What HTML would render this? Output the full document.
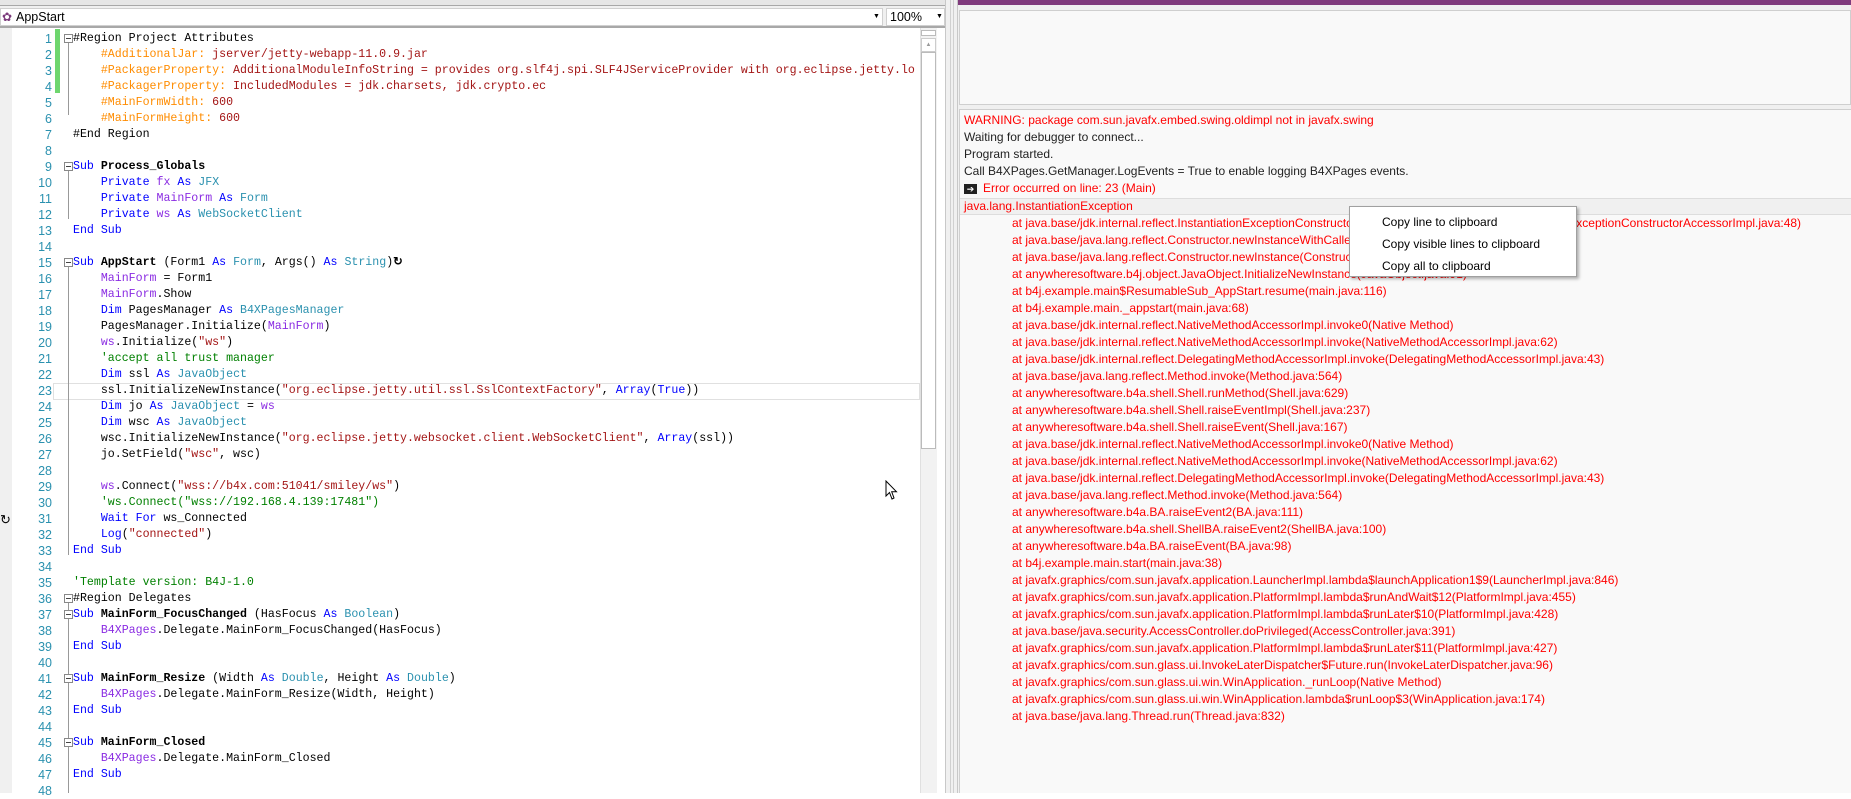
<!DOCTYPE html>
<html><head><meta charset="utf-8"><style>
*{margin:0;padding:0;box-sizing:border-box}
body{width:1851px;height:793px;position:relative;overflow:hidden;background:#fff;font-family:"Liberation Sans",sans-serif}
.a{position:absolute}
.code{position:absolute;left:0;top:31px;width:920px;font-family:"Liberation Mono",monospace;font-size:11.6px;color:#000}
.ln{position:absolute;height:16px;line-height:16px;white-space:pre}
.num{position:absolute;right:868px;width:40px;text-align:right;color:#2b91af;height:16px;line-height:16px;font-family:"Liberation Sans",sans-serif;font-size:12.5px}
.k{color:#0000ff}.t{color:#2b91af}.v{color:#8a2be2}.s{color:#a31515}.c{color:#008000}.o{color:#ff8c00}.b{font-weight:bold}
.fold{position:absolute;left:64px;width:9px;height:9px;border:1px solid #888;background:#fff;margin-top:3px}
.fold:after{content:"";position:absolute;left:1px;top:3px;width:5px;height:1px;background:#444}
.log{position:absolute;left:964px;font-size:12px;line-height:17px;color:#ff0000;white-space:pre}
</style></head><body>
<div class="a" style="left:0;top:0;width:945px;height:5px;background:#e6e6e6"></div>
<div class="a" style="left:0;top:5px;width:945px;height:1px;background:#a8a8a8"></div>
<div class="a" style="left:0;top:6px;width:945px;height:21px;background:#f0f0f0"></div>
<div class="a" style="left:0;top:26px;width:945px;height:2px;background:#a8a8a8"></div>
<div class="a" style="left:0;top:8px;width:883px;height:18px;background:#fff;border:1px solid #d0d0d0"></div>
<div class="a" style="left:2px;top:10px;font-size:12px;color:#7b3a7b">✿</div>
<div class="a" style="left:16px;top:9px;font-size:12.5px;line-height:16px">AppStart</div>
<div class="a" style="left:873px;top:9px;font-size:7px;line-height:16px">▼</div>
<div class="a" style="left:886px;top:8px;width:59px;height:18px;background:#fff;border:1px solid #d0d0d0"></div>
<div class="a" style="left:890px;top:9px;font-size:12.5px;line-height:16px">100%</div>
<div class="a" style="left:936px;top:9px;font-size:7px;line-height:16px">▼</div>
<div class="a" style="left:0;top:28px;width:12px;height:765px;background:#f0f0f0"></div>
<div class="a" style="left:55px;top:29px;width:5px;height:64px;background:#6ed66e"></div>
<div class="a" style="left:53px;top:383px;width:867px;height:17px;border:1px solid #e0e0e0"></div>
<div class="a" style="left:0;top:512px;font-size:13px;line-height:16px">↻</div>
<div class="a" style="left:68px;top:43px;width:1px;height:72px;background:#999"></div>
<div class="a" style="left:68px;top:171px;width:1px;height:48px;background:#999"></div>
<div class="a" style="left:68px;top:267px;width:1px;height:288px;background:#999"></div>
<div class="a" style="left:68px;top:603px;width:1px;height:190px;background:#999"></div>
<div class="code">
<div class="fold" style="top:0"></div><div class="fold" style="top:128px"></div><div class="fold" style="top:224px"></div><div class="fold" style="top:560px"></div><div class="fold" style="top:576px"></div><div class="fold" style="top:640px"></div><div class="fold" style="top:704px"></div>
<div class="num" style="top:0">1</div><div class="ln" style="top:0;left:73px">#Region Project Attributes</div>
<div class="num" style="top:16px">2</div><div class="ln" style="top:16px;left:73px">    <span class="o">#AdditionalJar:</span><span class="s"> jserver/jetty-webapp-11.0.9.jar</span></div>
<div class="num" style="top:32px">3</div><div class="ln" style="top:32px;left:73px">    <span class="o">#PackagerProperty:</span><span class="s"> AdditionalModuleInfoString = provides org.slf4j.spi.SLF4JServiceProvider with org.eclipse.jetty.lo</span></div>
<div class="num" style="top:48px">4</div><div class="ln" style="top:48px;left:73px">    <span class="o">#PackagerProperty:</span><span class="s"> IncludedModules = jdk.charsets, jdk.crypto.ec</span></div>
<div class="num" style="top:64px">5</div><div class="ln" style="top:64px;left:73px">    <span class="o">#MainFormWidth:</span><span class="s"> 600</span></div>
<div class="num" style="top:80px">6</div><div class="ln" style="top:80px;left:73px">    <span class="o">#MainFormHeight:</span><span class="s"> 600</span></div>
<div class="num" style="top:96px">7</div><div class="ln" style="top:96px;left:73px">#End Region</div>
<div class="num" style="top:112px">8</div>
<div class="num" style="top:128px">9</div><div class="ln" style="top:128px;left:73px"><span class="k">Sub</span> <span class="b">Process_Globals</span></div>
<div class="num" style="top:144px">10</div><div class="ln" style="top:144px;left:73px">    <span class="k">Private</span> <span class="v">fx</span> <span class="k">As</span> <span class="t">JFX</span></div>
<div class="num" style="top:160px">11</div><div class="ln" style="top:160px;left:73px">    <span class="k">Private</span> <span class="v">MainForm</span> <span class="k">As</span> <span class="t">Form</span></div>
<div class="num" style="top:176px">12</div><div class="ln" style="top:176px;left:73px">    <span class="k">Private</span> <span class="v">ws</span> <span class="k">As</span> <span class="t">WebSocketClient</span></div>
<div class="num" style="top:192px">13</div><div class="ln" style="top:192px;left:73px"><span class="k">End Sub</span></div>
<div class="num" style="top:208px">14</div>
<div class="num" style="top:224px">15</div><div class="ln" style="top:224px;left:73px"><span class="k">Sub</span> <span class="b">AppStart</span> (Form1 <span class="k">As</span> <span class="t">Form</span>, Args() <span class="k">As</span> <span class="t">String</span>)<b>↻</b></div>
<div class="num" style="top:240px">16</div><div class="ln" style="top:240px;left:73px">    <span class="v">MainForm</span> = Form1</div>
<div class="num" style="top:256px">17</div><div class="ln" style="top:256px;left:73px">    <span class="v">MainForm</span>.Show</div>
<div class="num" style="top:272px">18</div><div class="ln" style="top:272px;left:73px">    <span class="k">Dim</span> PagesManager <span class="k">As</span> <span class="t">B4XPagesManager</span></div>
<div class="num" style="top:288px">19</div><div class="ln" style="top:288px;left:73px">    PagesManager.Initialize(<span class="v">MainForm</span>)</div>
<div class="num" style="top:304px">20</div><div class="ln" style="top:304px;left:73px">    <span class="v">ws</span>.Initialize(<span class="s">"ws"</span>)</div>
<div class="num" style="top:320px">21</div><div class="ln" style="top:320px;left:73px">    <span class="c">'accept all trust manager</span></div>
<div class="num" style="top:336px">22</div><div class="ln" style="top:336px;left:73px">    <span class="k">Dim</span> ssl <span class="k">As</span> <span class="t">JavaObject</span></div>
<div class="num" style="top:352px">23</div><div class="ln" style="top:352px;left:73px">    ssl.InitializeNewInstance(<span class="s">"org.eclipse.jetty.util.ssl.SslContextFactory"</span>, <span class="k">Array</span>(<span class="k">True</span>))</div>
<div class="num" style="top:368px">24</div><div class="ln" style="top:368px;left:73px">    <span class="k">Dim</span> jo <span class="k">As</span> <span class="t">JavaObject</span> = <span class="v">ws</span></div>
<div class="num" style="top:384px">25</div><div class="ln" style="top:384px;left:73px">    <span class="k">Dim</span> wsc <span class="k">As</span> <span class="t">JavaObject</span></div>
<div class="num" style="top:400px">26</div><div class="ln" style="top:400px;left:73px">    wsc.InitializeNewInstance(<span class="s">"org.eclipse.jetty.websocket.client.WebSocketClient"</span>, <span class="k">Array</span>(ssl))</div>
<div class="num" style="top:416px">27</div><div class="ln" style="top:416px;left:73px">    jo.SetField(<span class="s">"wsc"</span>, wsc)</div>
<div class="num" style="top:432px">28</div>
<div class="num" style="top:448px">29</div><div class="ln" style="top:448px;left:73px">    <span class="v">ws</span>.Connect(<span class="s">"wss://b4x.com:51041/smiley/ws"</span>)</div>
<div class="num" style="top:464px">30</div><div class="ln" style="top:464px;left:73px">    <span class="c">'ws.Connect("wss://192.168.4.139:17481")</span></div>
<div class="num" style="top:480px">31</div><div class="ln" style="top:480px;left:73px">    <span class="k">Wait For</span> ws_Connected</div>
<div class="num" style="top:496px">32</div><div class="ln" style="top:496px;left:73px">    <span class="k">Log</span>(<span class="s">"connected"</span>)</div>
<div class="num" style="top:512px">33</div><div class="ln" style="top:512px;left:73px"><span class="k">End Sub</span></div>
<div class="num" style="top:528px">34</div>
<div class="num" style="top:544px">35</div><div class="ln" style="top:544px;left:73px"><span class="c">'Template version: B4J-1.0</span></div>
<div class="num" style="top:560px">36</div><div class="ln" style="top:560px;left:73px">#Region Delegates</div>
<div class="num" style="top:576px">37</div><div class="ln" style="top:576px;left:73px"><span class="k">Sub</span> <span class="b">MainForm_FocusChanged</span> (HasFocus <span class="k">As</span> <span class="t">Boolean</span>)</div>
<div class="num" style="top:592px">38</div><div class="ln" style="top:592px;left:73px">    <span class="v">B4XPages</span>.Delegate.MainForm_FocusChanged(HasFocus)</div>
<div class="num" style="top:608px">39</div><div class="ln" style="top:608px;left:73px"><span class="k">End Sub</span></div>
<div class="num" style="top:624px">40</div>
<div class="num" style="top:640px">41</div><div class="ln" style="top:640px;left:73px"><span class="k">Sub</span> <span class="b">MainForm_Resize</span> (Width <span class="k">As</span> <span class="t">Double</span>, Height <span class="k">As</span> <span class="t">Double</span>)</div>
<div class="num" style="top:656px">42</div><div class="ln" style="top:656px;left:73px">    <span class="v">B4XPages</span>.Delegate.MainForm_Resize(Width, Height)</div>
<div class="num" style="top:672px">43</div><div class="ln" style="top:672px;left:73px"><span class="k">End Sub</span></div>
<div class="num" style="top:688px">44</div>
<div class="num" style="top:704px">45</div><div class="ln" style="top:704px;left:73px"><span class="k">Sub</span> <span class="b">MainForm_Closed</span></div>
<div class="num" style="top:720px">46</div><div class="ln" style="top:720px;left:73px">    <span class="v">B4XPages</span>.Delegate.MainForm_Closed</div>
<div class="num" style="top:736px">47</div><div class="ln" style="top:736px;left:73px"><span class="k">End Sub</span></div>
<div class="num" style="top:752px">48</div>
</div>
<div class="a" style="left:920px;top:28px;width:17px;height:765px;background:#f2f2f2;border-left:1px solid #e0e0e0"></div>
<div class="a" style="left:921px;top:30px;width:15px;height:6px;background:#fff;border:1px solid #bbb"></div>
<div class="a" style="left:921px;top:38px;width:15px;height:14px;background:#fff;border:1px solid #ccc;font-size:6px;color:#999;text-align:center;line-height:12px">▲</div>
<div class="a" style="left:921px;top:52px;width:15px;height:397px;background:#fff;border:1px solid #bbb"></div>
<svg class="a" style="left:885px;top:480px" width="14" height="22" viewBox="0 0 14 22"><path d="M1 1 L1 16 L4.5 12.5 L7 19 L9 18 L6.7 11.8 L11.5 11.8 Z" fill="#fff" stroke="#000" stroke-width="1"/></svg>
<div class="a" style="left:937px;top:28px;width:8px;height:765px;background:#fff"></div>
<div class="a" style="left:945px;top:0;width:13px;height:793px;background:#f0f0f0;border-left:1px solid #c8c8c8;border-right:1px solid #c8c8c8"></div>
<div class="a" style="left:950px;top:0;width:4px;height:793px;border-left:1px solid #d0d0d0;border-right:1px solid #d0d0d0"></div>
<div class="a" style="left:958px;top:0;width:893px;height:793px;background:#f0f0f0"></div>
<div class="a" style="left:958px;top:0;width:893px;height:5px;background:#7f3a7c"></div>
<div class="a" style="left:959px;top:10px;width:892px;height:95px;background:#f9f9f9;border:1px solid #cfcfcf"></div>
<div class="a" style="left:959px;top:109px;width:892px;height:684px;background:#f9f9f9;border-left:1px solid #cfcfcf;border-top:1px solid #cfcfcf"></div>
<div class="a" style="left:960px;top:198px;width:891px;height:17px;background:#f0f0f0;border-top:1px solid #ddd;border-bottom:1px solid #ddd"></div>
<div class="log" style="top:112px">WARNING: package com.sun.javafx.embed.swing.oldimpl not in javafx.swing</div>
<div class="log" style="top:129px;color:#222">Waiting for debugger to connect...</div>
<div class="log" style="top:146px;color:#222">Program started.</div>
<div class="log" style="top:163px;color:#222">Call B4XPages.GetManager.LogEvents = True to enable logging B4XPages events.</div>
<div class="a" style="left:964px;top:184px;width:13px;height:10px;background:#222;color:#fff;font-size:9px;line-height:10px;text-align:center">➔</div>
<div class="log" style="top:180px;left:983px">Error occurred on line: 23 (Main)</div>
<div class="log" style="top:198px">java.lang.InstantiationException</div>
<div class="log" style="top:215px;left:1012px">at java.base/jdk.internal.reflect.InstantiationExceptionConstructorAccessorImpl.newInstance(InstantiationExceptionConstructorAccessorImpl.java:48)
at java.base/java.lang.reflect.Constructor.newInstanceWithCaller(Constructor.java:500)
at java.base/java.lang.reflect.Constructor.newInstance(Constructor.java:481)
at anywheresoftware.b4j.object.JavaObject.InitializeNewInstance(JavaObject.java:91)
at b4j.example.main$ResumableSub_AppStart.resume(main.java:116)
at b4j.example.main._appstart(main.java:68)
at java.base/jdk.internal.reflect.NativeMethodAccessorImpl.invoke0(Native Method)
at java.base/jdk.internal.reflect.NativeMethodAccessorImpl.invoke(NativeMethodAccessorImpl.java:62)
at java.base/jdk.internal.reflect.DelegatingMethodAccessorImpl.invoke(DelegatingMethodAccessorImpl.java:43)
at java.base/java.lang.reflect.Method.invoke(Method.java:564)
at anywheresoftware.b4a.shell.Shell.runMethod(Shell.java:629)
at anywheresoftware.b4a.shell.Shell.raiseEventImpl(Shell.java:237)
at anywheresoftware.b4a.shell.Shell.raiseEvent(Shell.java:167)
at java.base/jdk.internal.reflect.NativeMethodAccessorImpl.invoke0(Native Method)
at java.base/jdk.internal.reflect.NativeMethodAccessorImpl.invoke(NativeMethodAccessorImpl.java:62)
at java.base/jdk.internal.reflect.DelegatingMethodAccessorImpl.invoke(DelegatingMethodAccessorImpl.java:43)
at java.base/java.lang.reflect.Method.invoke(Method.java:564)
at anywheresoftware.b4a.BA.raiseEvent2(BA.java:111)
at anywheresoftware.b4a.shell.ShellBA.raiseEvent2(ShellBA.java:100)
at anywheresoftware.b4a.BA.raiseEvent(BA.java:98)
at b4j.example.main.start(main.java:38)
at javafx.graphics/com.sun.javafx.application.LauncherImpl.lambda$launchApplication1$9(LauncherImpl.java:846)
at javafx.graphics/com.sun.javafx.application.PlatformImpl.lambda$runAndWait$12(PlatformImpl.java:455)
at javafx.graphics/com.sun.javafx.application.PlatformImpl.lambda$runLater$10(PlatformImpl.java:428)
at java.base/java.security.AccessController.doPrivileged(AccessController.java:391)
at javafx.graphics/com.sun.javafx.application.PlatformImpl.lambda$runLater$11(PlatformImpl.java:427)
at javafx.graphics/com.sun.glass.ui.InvokeLaterDispatcher$Future.run(InvokeLaterDispatcher.java:96)
at javafx.graphics/com.sun.glass.ui.win.WinApplication._runLoop(Native Method)
at javafx.graphics/com.sun.glass.ui.win.WinApplication.lambda$runLoop$3(WinApplication.java:174)
at java.base/java.lang.Thread.run(Thread.java:832)</div>
<div class="a" style="left:1349px;top:206px;width:228px;height:71px;background:#fff;border:1px solid #a0a0a0;box-shadow:2px 2px 3px rgba(0,0,0,0.3)"></div>
<div class="a" style="left:1382px;top:211px;font-size:12px;line-height:22px;color:#000">Copy line to clipboard<br>Copy visible lines to clipboard<br>Copy all to clipboard</div>
</body></html>
